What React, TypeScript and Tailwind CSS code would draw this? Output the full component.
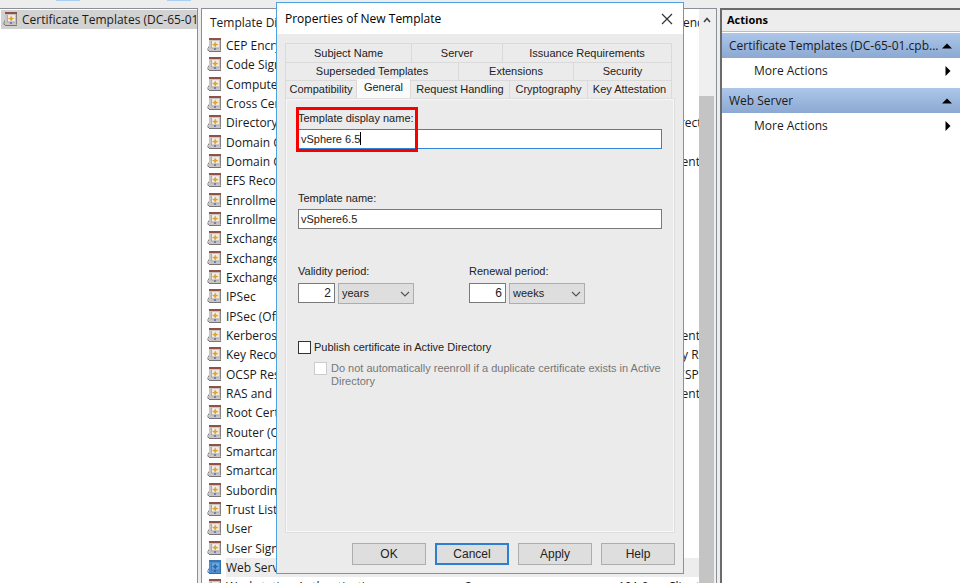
import { useState } from "react";
import { clsx } from "clsx";

const templates = [
  { name: "CEP Encryption", purpose: "" },
  { name: "Code Signing", purpose: "" },
  { name: "Computer", purpose: "" },
  { name: "Cross Certification Authority", purpose: "" },
  { name: "Directory Email Replication", purpose: "Directory" },
  { name: "Domain Controller", purpose: "" },
  { name: "Domain Controller Authentication", purpose: "Client A" },
  { name: "EFS Recovery Agent", purpose: "" },
  { name: "Enrollment Agent", purpose: "" },
  { name: "Enrollment Agent (Computer)", purpose: "" },
  { name: "Exchange Enrollment Agent", purpose: "" },
  { name: "Exchange Signature Only", purpose: "" },
  { name: "Exchange User", purpose: "" },
  { name: "IPSec", purpose: "" },
  { name: "IPSec (Offline request)", purpose: "" },
  { name: "Kerberos Authentication", purpose: "Client A" },
  { name: "Key Recovery Agent", purpose: "Key Rec" },
  { name: "OCSP Response Signing", purpose: "OCSP S" },
  { name: "RAS and IAS Server", purpose: "Client A" },
  { name: "Root Certification Authority", purpose: "" },
  { name: "Router (Offline request)", purpose: "" },
  { name: "Smartcard Logon", purpose: "" },
  { name: "Smartcard User", purpose: "" },
  { name: "Subordinate Certification", purpose: "" },
  { name: "Trust List Signing", purpose: "" },
  { name: "User", purpose: "" },
  { name: "User Signature Only", purpose: "" },
  { name: "Web Server", purpose: "", selected: true },
  { name: "Workstation Authentication", schema: "2", version: "101.0", purpose: "Client A" },
];

const tabRows = [
  [
    { label: "Subject Name", width: "w-[126px]" },
    { label: "Server", width: "w-[91px]" },
    { label: "Issuance Requirements", width: "flex-1" },
  ],
  [
    { label: "Superseded Templates", width: "w-[173px]" },
    { label: "Extensions", width: "w-[115px]" },
    { label: "Security", width: "flex-1" },
  ],
  [
    { label: "Compatibility", width: "w-[71px]" },
    { label: "General", width: "w-[54px]" },
    { label: "Request Handling", width: "w-[99px]" },
    { label: "Cryptography", width: "w-[78px]" },
    { label: "Key Attestation", width: "flex-1" },
  ],
];

const TemplateIcon = ({ selected = false }: { selected?: boolean }) => (
  <svg viewBox="0 0 15 15" className="h-[15px] w-[15px] shrink-0" aria-hidden="true">
    <path d="M2.5 8 L1 10.5 V12.5 H3" fill="none" stroke={selected ? "#3f78b5" : "#77777c"} />
    <rect x="2" y="1" width="12" height="12" fill={selected ? "#4f8fd0" : "#c9c5c3"} />
    <rect x="2" y="0" width="12" height="2" fill={selected ? "#3a74b0" : "#8e5347"} />
    <rect x="4" y="3" width="8" height="7" rx="1" fill={selected ? "#69a5e0" : "#efeae6"} />
    <path d="M4.5 3 V10 H12" fill="none" stroke={selected ? "#3a74b0" : "#a19c9a"} strokeWidth="0.8" />
    <path d="M8.2 3.6 L9.3 5.8 L11.6 6.6 L9.3 7.5 L8.2 9.7 L7.1 7.5 L4.9 6.6 L7.1 5.8 Z" fill={selected ? "#2d66a3" : "#e0a526"} />
    <rect x="7" y="10" width="2" height="2" fill={selected ? "#2d66a3" : "#6e80bd"} />
    <path d="M13.5 2 V12.5" fill="none" stroke={selected ? "#34699f" : "#88817f"} />
    <path d="M2 13.5 H14" fill="none" stroke={selected ? "#34699f" : "#77757a"} />
  </svg>
);

const ActionGroup = ({ title }: { title: string }) => (
  <section className="mb-px">
    <button className="flex h-[25px] w-full items-center justify-between bg-gradient-to-b from-[#adc6ea] to-[#8ca9d2] pr-2 pl-[7px] text-left">
      <span className="truncate">{title}</span>
      <svg viewBox="0 0 10 6" className="h-[6px] w-[10px] shrink-0" aria-hidden="true">
        <path d="M0 5.5 L5 0.5 L10 5.5 Z" fill="#000" />
      </svg>
    </button>
    <button className="flex h-[29px] w-full items-center justify-between pr-[9px] pb-1 pl-8 text-left">
      <span>More Actions</span>
      <svg viewBox="0 0 6 10" className="h-[10px] w-[6px]" aria-hidden="true">
        <path d="M0.5 0 L5.5 5 L0.5 10 Z" fill="#000" />
      </svg>
    </button>
  </section>
);

type PeriodProps = { id: string; label: string; amount: string; unit: string };

const PeriodField = ({ id, label, amount, unit }: PeriodProps) => (
  <div className="w-[171px]">
    <label htmlFor={id} className="block h-4 leading-4">{label}</label>
    <div className="mt-1 flex gap-[3px]">
      <input id={id} defaultValue={amount} className="h-5 w-[37px] border border-[#7a7a7a] bg-white pr-[3px] text-right text-[12px] outline-none" />
      <div className="relative">
        <select aria-label={`${label} unit`} defaultValue={unit} className="h-[21px] w-[76px] appearance-none border border-[#adadad] bg-[#dedede] pl-[3px] outline-none">
          <option>{unit}</option>
        </select>
        <svg viewBox="0 0 10 6" className="pointer-events-none absolute top-2 right-1 h-[6px] w-[10px]" aria-hidden="true">
          <path d="M1 1 L5 5 L9 1" fill="none" stroke="#555" strokeWidth="1.2" />
        </svg>
      </div>
    </div>
  </div>
);

const PropertiesDialog = () => {
  const [activeTab, setActiveTab] = useState("General");
  const [displayName, setDisplayName] = useState("vSphere 6.5");

  return (
    <div
      role="dialog"
      aria-label="Properties of New Template"
      className="absolute top-[2px] left-[276px] flex w-[408px] flex-col border border-[#4da3e0] bg-[#ebebeb] font-['Liberation_Sans',Arial,sans-serif] text-[11px] text-[#222]"
    >
      <div className="flex h-[31px] items-center justify-between bg-white pr-[10px] pl-2">
        <h2 className="font-['Open_Sans','Noto_Sans',sans-serif] text-[12px] text-black">Properties of New Template</h2>
        <button aria-label="Close">
          <svg viewBox="0 0 12 12" className="h-3 w-3" aria-hidden="true">
            <path d="M1 1 L11 11 M11 1 L1 11" fill="none" stroke="#333" strokeWidth="1.2" />
          </svg>
        </button>
      </div>

      <div className="px-2 pt-[9px]">
        <div role="tablist" className="mr-[3px] border-t border-l border-[#dadada]">
          {tabRows.map((row, i) => (
            <div key={i} className="flex h-[18px] not-first:border-t not-first:border-[#dadada]">
              {row.map((tab) => (
                <button
                  key={tab.label}
                  role="tab"
                  aria-selected={tab.label === activeTab}
                  onClick={() => setActiveTab(tab.label)}
                  className={clsx(
                    "border-r border-[#dadada] whitespace-nowrap",
                    tab.width,
                    tab.label === activeTab && "-mt-[2px] bg-[#fafafa] pb-[2px]"
                  )}
                >
                  {tab.label}
                </button>
              ))}
            </div>
          ))}
        </div>

        <div role="tabpanel" className="h-[435px] border-2 border-[#f8f8f8] px-[11px] pt-[10px] outline-1 -outline-offset-1 outline-[#dedede]">
          <div className="relative">
            <label htmlFor="display-name" className="block h-4 leading-4">Template display name:</label>
            <input
              id="display-name"
              value={displayName}
              onChange={(e) => setDisplayName(e.target.value)}
              className="mt-[3px] block h-5 w-full border border-[#2f86d6] bg-white px-[2px] outline-none"
            />
            {/* text cursor */}
            <span className="absolute top-[22px] left-[62px] h-[13px] w-px bg-black" />
            {/* red highlight */}
            <span className="pointer-events-none absolute -top-[3px] -left-[2px] h-[45px] w-[122px] border-3 border-[#f80000]" />
          </div>

          <div className="mt-[41px]">
            <label htmlFor="template-name" className="block h-4 leading-4">Template name:</label>
            <input
              id="template-name"
              defaultValue="vSphere6.5"
              className="mt-[3px] block h-5 w-full border border-[#7a7a7a] bg-white px-[2px] outline-none"
            />
          </div>

          <div className="mt-[34px] flex">
            <PeriodField id="validity" label="Validity period:" amount="2" unit="years" />
            <PeriodField id="renewal" label="Renewal period:" amount="6" unit="weeks" />
          </div>

          <div className="mt-[37px] flex items-center gap-[3px]">
            <input id="publish" type="checkbox" className="h-[13px] w-[13px] appearance-none border border-[#333] bg-white" />
            <label htmlFor="publish" className="leading-[13px]">Publish certificate in Active Directory</label>
          </div>
          <div className="mt-2 ml-4 flex items-start gap-1 text-[#777]">
            <input id="reenroll" type="checkbox" disabled className="h-[13px] w-[13px] shrink-0 appearance-none border border-[#ccc] bg-white" />
            <label htmlFor="reenroll" className="leading-[13px]">
              Do not automatically reenroll if a duplicate certificate exists in Active Directory
            </label>
          </div>
        </div>
      </div>

      <div className="flex justify-end gap-[9px] px-2 pt-[10px] pb-2">
        {["OK", "Cancel", "Apply", "Help"].map((label) => (
          <button
            key={label}
            className={clsx(
              "h-[22px] w-[74px] bg-[#dedede] text-[12px]",
              label === "Cancel" ? "border-2 border-[#2f7fd0]" : "border border-[#adadad]"
            )}
          >
            {label}
          </button>
        ))}
      </div>
    </div>
  );
};

const App = () => {
  return (
    <div className="relative flex h-screen flex-col overflow-hidden bg-[#ededed] font-['Open_Sans','Noto_Sans',sans-serif] text-[12px] text-[#1a1a1a]">
      {/* bottom edge of the toolbar */}
      <div className="flex h-2 shrink-0 items-start gap-[87px] pl-14">
        <span className="h-px w-6 bg-[#a9d0f2]" />
        <span className="h-px w-6 bg-[#a9d0f2]" />
      </div>

      <div className="flex min-h-0 flex-1 gap-[3px]">
        <nav className="w-[198px] shrink-0 overflow-hidden border border-b-0 border-l-0 border-[#8b8f98] bg-white pt-px pl-px">
          <a href="#templates" className="flex h-[19px] items-center gap-1 overflow-hidden bg-[#d2d2d2] pl-[2px] whitespace-nowrap">
            <TemplateIcon />
            Certificate Templates (DC-65-01
          </a>
        </nav>

        <main className="flex min-w-0 flex-1 border border-b-0 border-[#8b8f98] bg-white">
          <div className="min-w-0 flex-1 overflow-hidden">
            <table className="w-full table-fixed border-collapse text-left whitespace-nowrap">
              <thead>
                <tr className="h-[27px]">
                  <th className="p-0 pl-2 font-normal">Template Display Name</th>
                  <th className="w-[153px] p-0" />
                  <th className="w-[50px] p-0" />
                  <th className="w-[31px] overflow-hidden p-0 font-normal">Intended Purposes</th>
                </tr>
              </thead>
              <tbody>
                {templates.map((template, i) => (
                  <tr key={i} className="h-[19px] nth-[3n]:h-5">
                    <td className="overflow-hidden p-0 pl-[5px] leading-[19px]">
                      <div className="flex items-center gap-1">
                        <TemplateIcon selected={template.selected} />
                        <span className={clsx("flex-1", template.selected && "bg-[#ededed]")}>{template.name}</span>
                      </div>
                    </td>
                    <td className={clsx("p-0", template.selected && "bg-[#ededed]")}>{template.schema}</td>
                    <td className={clsx("p-0", template.selected && "bg-[#ededed]")}>{template.version}</td>
                    <td className={clsx("overflow-hidden p-0 leading-[19px]", template.selected && "bg-[#ededed]")}>{template.purpose}</td>
                  </tr>
                ))}
              </tbody>
            </table>
          </div>
          <div className="flex w-[17px] shrink-0 flex-col bg-[#efefef] pr-[2px]">
            <button aria-label="Scroll up" className="flex h-[21px] items-center justify-center">
              <svg viewBox="0 0 8 6" className="h-[6px] w-2" aria-hidden="true">
                <path d="M1 5 L4 1.5 L7 5" fill="none" stroke="#444" strokeWidth="1.6" />
              </svg>
            </button>
            <div className="mt-[66px] flex-1 bg-[#c4c4c4]" />
          </div>
        </main>

        <aside className="w-[240px] shrink-0 border-t-2 border-l-2 border-[#6b6b6b] bg-white">
          <h2 className="mb-px flex h-[22px] items-center border-b border-[#bdbdbd] bg-[#ededed] pl-[5px] text-[11px] font-bold text-black">Actions</h2>
          <ActionGroup title="Certificate Templates (DC-65-01.cpb..." />
          <ActionGroup title="Web Server" />
        </aside>
      </div>

      <PropertiesDialog />
    </div>
  );
};

export default App;
